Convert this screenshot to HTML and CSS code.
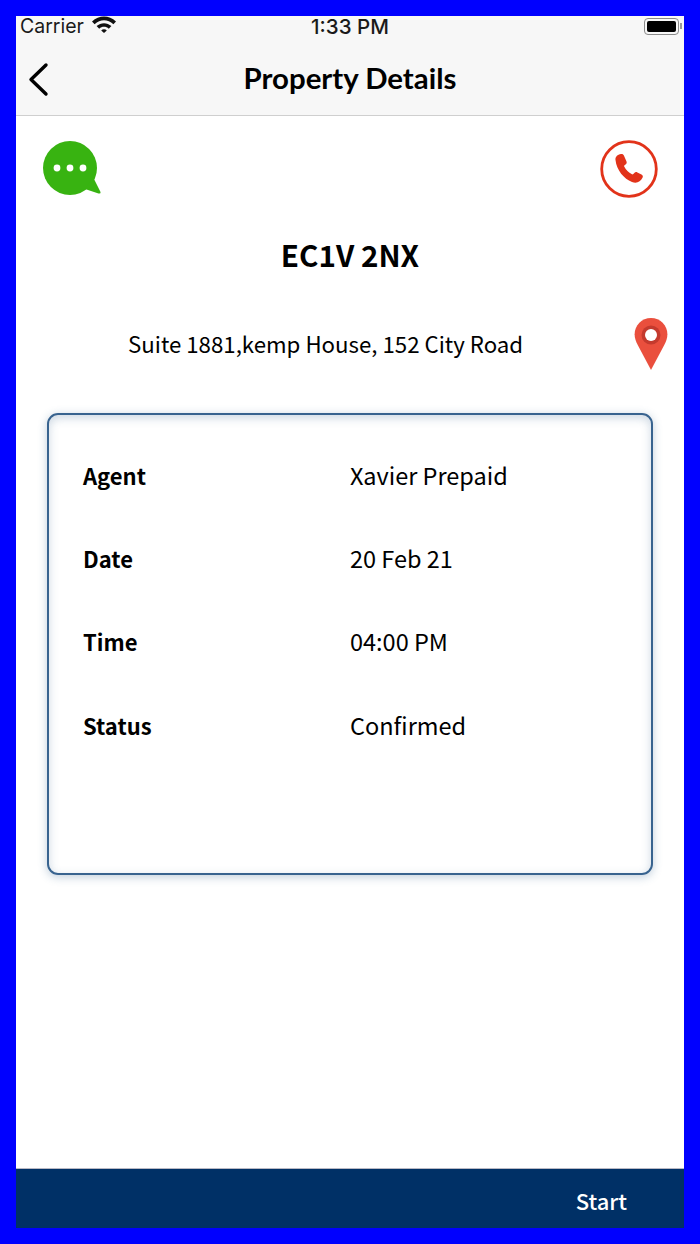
FILE: index.html
```html
<!DOCTYPE html>
<html>
  <head>
    <title>Property Details</title>
    <link rel="stylesheet" href="styles.css">
  </head>
  <body>
    <div id="screen">
      <div id="top-bar">
        <div id="status-bar">
          <div class="status-left">
            <span class="carrier">Carrier</span>
            <svg class="wifi" width="26" height="18" viewBox="0 0 26 18">
              <path d="M1 6.500C8-.2 18-.2 25 6.500L22.400 9.200C16.800 4 9.200 4 3.600 9.200Z" fill="#111"/>
              <path d="M5.600 11.100C9.800 7.200 16.200 7.200 20.400 11.100L17.800 13.700C15 11.200 11 11.200 8.200 13.700Z" fill="#111"/>
              <path d="M10.200 15.400C11.800 14 14.200 14 15.800 15.400L13 18Z" fill="#111"/>
            </svg>
          </div>
          <span class="status-time">1:33 PM</span>
          <div class="battery"><div class="battery-fill"></div></div>
        </div>
        <div id="nav-bar">
          <svg class="back" width="24" height="36" viewBox="0 0 24 36">
            <path d="M20 4L5 18.500L20 33" fill="none" stroke="#000" stroke-width="3.400" stroke-linecap="round" stroke-linejoin="round"/>
          </svg>
          <span class="nav-title">Property Details</span>
        </div>
      </div>

      <div id="actions">
        <svg width="58" height="57" viewBox="0 0 58 57">
          <circle cx="27" cy="28" r="27" fill="#38b311"/>
          <path d="M50 37L57.500 52Q58 54 55.500 53.500L42 49Z" fill="#38b311"/>
          <circle cx="14" cy="28" r="3.400" fill="#fff"/>
          <circle cx="27" cy="28" r="3.400" fill="#fff"/>
          <circle cx="40" cy="28" r="3.400" fill="#fff"/>
        </svg>
        <svg width="58" height="58" viewBox="0 0 58 58">
          <circle cx="29" cy="29" r="27.300" fill="none" stroke="#e2331a" stroke-width="2.800"/>
          <path d="M15.500 20C15 17 17.500 14.500 21 14C22.500 13.800 23.500 14.500 24 15.800L26.500 21.500C27 22.800 26.500 23.800 25.500 24.500L24.300 25.400C24 25.700 24 26.200 24.200 26.600C26 30 28.500 32.500 32 34.300C32.500 34.500 33 34.500 33.300 34.100L34.300 33C35.200 32 36.200 31.800 37.400 32.400L41.500 34.500C43 35.300 43.200 36.500 42.500 37.800C40.500 42 36.500 43.800 32 42C24 39 16.500 30 15.500 20Z" fill="#e2331a"/>
        </svg>
      </div>

      <h1 id="postcode">EC1V 2NX</h1>

      <div id="address">
        <span class="address-text">Suite 1881,kemp House, 152 City Road</span>
        <svg width="34" height="54" viewBox="0 0 34 54">
          <path d="M17 1C7.800 1 .6 8.300 .6 17.200C.6 21.500 2 24.500 4 28.500L17 53L30 28.500C32 24.500 33.400 21.500 33.400 17.200C33.400 8.300 26.200 1 17 1Z" fill="#ea4f3d"/>
          <circle cx="17" cy="18" r="9.500" fill="#c43a2e"/>
          <circle cx="17" cy="18" r="6" fill="#fff"/>
        </svg>
      </div>

      <div id="card">
        <div class="row"><span class="row-label">Agent</span><span class="row-value">Xavier Prepaid</span></div>
        <div class="row"><span class="row-label">Date</span><span class="row-value">20 Feb 21</span></div>
        <div class="row"><span class="row-label">Time</span><span class="row-value">04:00 PM</span></div>
        <div class="row"><span class="row-label">Status</span><span class="row-value">Confirmed</span></div>
      </div>

      <div id="bottom-bar"><span>Start</span></div>
    </div>
  </body>
</html>
```

FILE: styles.css
```css
html, body {
    padding: 0;
    margin: 0;
}

body {
    background: #0000ff;
    font-family: "Noto Sans CJK SC", "Noto Sans", sans-serif;
    color: #000;
}

#screen {
    box-sizing: border-box;
    width: 700px;
    height: 1244px;
    border: 16px solid #0000ff;
    background: #fff;
    display: flex;
    flex-direction: column;
}

#top-bar {
    height: 99px;
    background: #f7f7f7;
    border-bottom: 1px solid #cfcfcf;
    flex-shrink: 0;
}

#status-bar {
    height: 20px;
    padding: 0 4px;
    display: flex;
    align-items: center;
    justify-content: space-between;
    font-family: Inter, sans-serif;
    font-size: 19.500px;
    color: #1a1a1a;
    position: relative;
}

.status-left {
    display: flex;
    align-items: center;
    gap: 7px;
}

.wifi {
    margin-top: -4px;
}

.status-time {
    position: absolute;
    left: 0;
    right: 0;
    text-align: center;
    font-size: 20.500px;
    font-weight: 500;
}

.battery {
    width: 35px;
    height: 17px;
    margin-right: 1px;
    padding: 2px;
    box-sizing: border-box;
    border: 1.500px solid #8a8a8a;
    border-radius: 4px;
    position: relative;
}

.battery::after {
    content: "";
    position: absolute;
    right: -4px;
    top: 4px;
    width: 2px;
    height: 6px;
    background: #9a9a9a;
}

.battery-fill {
    height: 100%;
    background: #000;
    border-radius: 2px;
}

#nav-bar {
    height: 79px;
    display: flex;
    align-items: center;
    justify-content: center;
    position: relative;
}

.back {
    position: absolute;
    left: 10px;
    top: 25px;
}

.nav-title {
    font-family: Lato, sans-serif;
    font-weight: 700;
    font-size: 29.400px;
    margin-top: 4px;
}

#actions {
    display: flex;
    justify-content: space-between;
    padding: 24px 26.500px 0 27px;
}

#postcode {
    margin: 35px 0 0;
    font-size: 29.600px;
    line-height: 44px;
    font-weight: 700;
    text-align: center;
}

#address {
    display: flex;
    align-items: center;
    justify-content: space-between;
    margin-top: 40px;
    padding: 0 16px 0 112px;
    font-size: 22.250px;
}

.address-text {
    margin-top: -2px;
}

#card {
    box-sizing: border-box;
    height: 462px;
    margin: 42px 31px 0;
    padding: 18px 34px;
    border: 2px solid #38638f;
    border-radius: 11px;
    box-shadow: 0 2px 10px rgba(56, 99, 143, 0.32), inset 0 3px 10px rgba(56, 99, 143, 0.25);
}

.row {
    display: flex;
    height: 83.300px;
    align-items: center;
    font-size: 23.500px;
}

.row-label {
    width: 267px;
    font-size: 22px;
    font-weight: 700;
}

#bottom-bar {
    margin-top: auto;
    height: 59px;
    background: #003066;
    border-top: 1px solid #b9b9c4;
    display: flex;
    align-items: center;
    justify-content: flex-end;
    padding: 0 57px 0 0;
    color: #fff;
    font-size: 22px;
    font-weight: 500;
}

#bottom-bar span {
    margin-top: 2px;
}
```
